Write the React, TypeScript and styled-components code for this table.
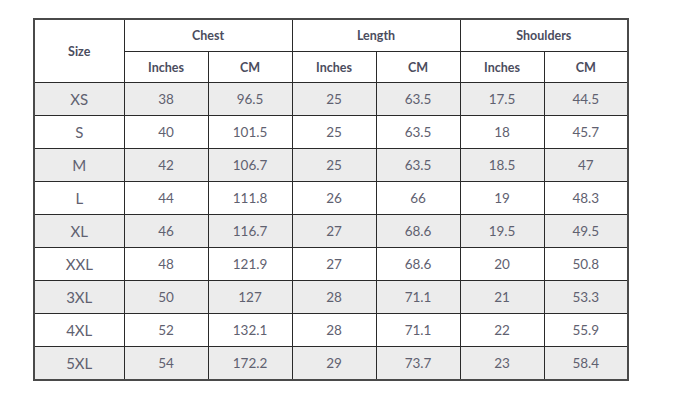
import React from 'react';
import styled, { createGlobalStyle } from 'styled-components';

type SizeRow = {
  size: string;
  chest: [string, string];
  length: [string, string];
  shoulders: [string, string];
};

const rows: SizeRow[] = [
  { size: 'XS', chest: ['38', '96.5'], length: ['25', '63.5'], shoulders: ['17.5', '44.5'] },
  { size: 'S', chest: ['40', '101.5'], length: ['25', '63.5'], shoulders: ['18', '45.7'] },
  { size: 'M', chest: ['42', '106.7'], length: ['25', '63.5'], shoulders: ['18.5', '47'] },
  { size: 'L', chest: ['44', '111.8'], length: ['26', '66'], shoulders: ['19', '48.3'] },
  { size: 'XL', chest: ['46', '116.7'], length: ['27', '68.6'], shoulders: ['19.5', '49.5'] },
  { size: 'XXL', chest: ['48', '121.9'], length: ['27', '68.6'], shoulders: ['20', '50.8'] },
  { size: '3XL', chest: ['50', '127'], length: ['28', '71.1'], shoulders: ['21', '53.3'] },
  { size: '4XL', chest: ['52', '132.1'], length: ['28', '71.1'], shoulders: ['22', '55.9'] },
  { size: '5XL', chest: ['54', '172.2'], length: ['29', '73.7'], shoulders: ['23', '58.4'] },
];

const GlobalStyle = createGlobalStyle`
  body {
    margin: 0;
    background: #fff;
    font-family: Lato, 'Open Sans', sans-serif;
  }
`;

const Page = styled.div`
  width: 676px;
  height: 400px;
  padding: 18px 0 0 33px;
  box-sizing: border-box;
`;

const Table = styled.table`
  border-collapse: collapse;
  table-layout: fixed;
  width: 594px;
  border: 2px solid #4a4a4a;
`;

const HeadCell = styled.th<{ $tall?: boolean }>`
  height: ${p => (p.$tall ? 31 : 30)}px;
  padding: 0;
  border: 1px solid #2a2a2a;
  font-size: 12.5px;
  font-weight: 700;
  color: #4b4d5e;
  text-align: center;
  vertical-align: middle;
`;

const Row = styled.tr<{ $shaded: boolean }>`
  background: ${p => (p.$shaded ? '#ececec' : '#fff')};
`;

const Cell = styled.td`
  height: 32px;
  padding: 0;
  border: 1px solid #2a2a2a;
  font-size: 13.5px;
  color: #5f6170;
  text-align: center;
  vertical-align: middle;
`;

const SizeCell = styled(Cell)`
  font-size: 15px;
`;

export default function App() {
  return (
    <>
      <GlobalStyle />
      <Page>
        <Table>
          <colgroup>
            <col style={{ width: 90 }} />
            <col style={{ width: 84 }} />
            <col style={{ width: 84 }} />
            <col style={{ width: 84 }} />
            <col style={{ width: 84 }} />
            <col style={{ width: 84 }} />
            <col style={{ width: 84 }} />
          </colgroup>
          <thead>
            <tr>
              <HeadCell rowSpan={2}>Size</HeadCell>
              <HeadCell colSpan={2} $tall>Chest</HeadCell>
              <HeadCell colSpan={2} $tall>Length</HeadCell>
              <HeadCell colSpan={2} $tall>Shoulders</HeadCell>
            </tr>
            <tr>
              <HeadCell>Inches</HeadCell>
              <HeadCell>CM</HeadCell>
              <HeadCell>Inches</HeadCell>
              <HeadCell>CM</HeadCell>
              <HeadCell>Inches</HeadCell>
              <HeadCell>CM</HeadCell>
            </tr>
          </thead>
          <tbody>
            {rows.map((r, i) => (
              <Row key={r.size} $shaded={i % 2 === 0}>
                <SizeCell>{r.size}</SizeCell>
                <Cell>{r.chest[0]}</Cell>
                <Cell>{r.chest[1]}</Cell>
                <Cell>{r.length[0]}</Cell>
                <Cell>{r.length[1]}</Cell>
                <Cell>{r.shoulders[0]}</Cell>
                <Cell>{r.shoulders[1]}</Cell>
              </Row>
            ))}
          </tbody>
        </Table>
      </Page>
    </>
  );
}
